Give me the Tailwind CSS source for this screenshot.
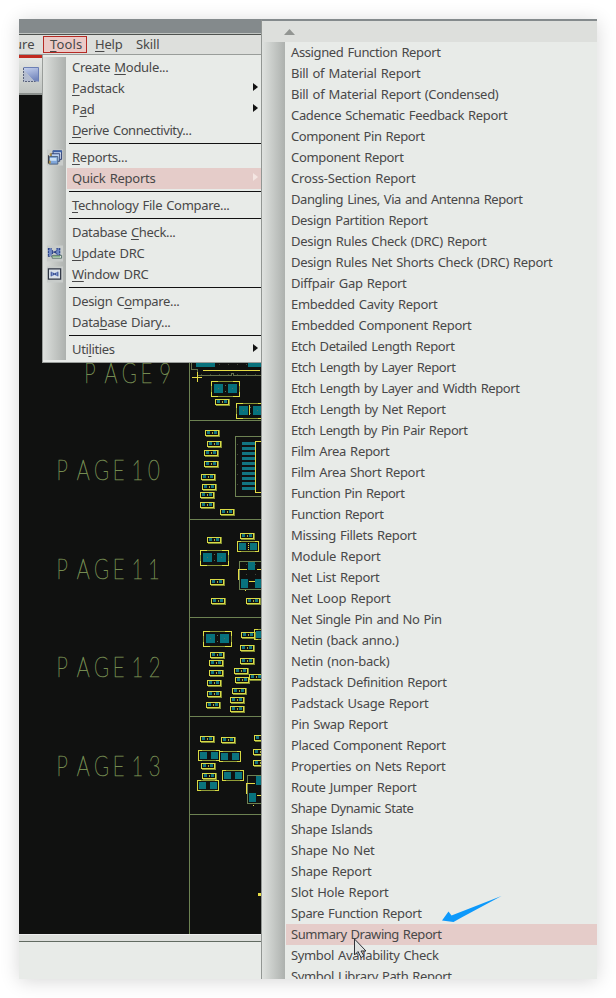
<!DOCTYPE html>
<html lang="en">
<head>
<meta charset="utf-8">
<title>Tools menu</title>
<script src="https://cdn.jsdelivr.net/npm/@tailwindcss/browser@4"></script>
</head>
<body class="bg-white w-[616px] h-[998px] overflow-hidden p-[19px] text-[#484848] text-[13px] font-['Noto_Sans',sans-serif]">
<main class="relative w-[578px] h-[960px] flex flex-col bg-[#e8ebe8] shadow-[0_2px_18px_rgba(0,0,0,0.16)]">
  <div class="h-[14px] shrink-0 bg-[radial-gradient(ellipse_at_95px_10px,#88897b_0,#848a8c_22px)]"></div>
  <div class="h-px shrink-0 bg-[#c0c4c1]"></div>
  <nav class="flex h-[20px] shrink-0 border-t border-[#4e524f] bg-[#dddfdc] leading-[19px]">
    <span class="w-[24px] overflow-hidden flex"><span class="-ml-[5px]">ure</span></span>
    <span class="mt-[1px] h-[17px] w-[44px] border border-[#b52a24] bg-[#ebcac7] pl-[6px] leading-[15px]"><span data-w="32"><u class="decoration-1 underline-offset-2">T</u>ools</span></span>
    <span class="ml-[8px] w-[41px]"><span data-w="27"><u class="decoration-1 underline-offset-2">H</u>elp</span></span>
    <span><span data-w="23">Skill</span></span>
  </nav>
  <div class="h-px shrink-0 bg-[#999d9a]"></div>
  <div class="h-[3px] shrink-0 bg-[#c22a20]"></div>
  <div class="h-[37px] shrink-0 border-b-2 border-[#8b908d] bg-linear-to-b from-[#e3e6e3] to-[#bfc3c0] pt-[8px] pl-[3px]">
    <svg width="18" height="17" viewBox="0 0 18 17"><defs><linearGradient id="b" x2="0.3" y2="1"><stop stop-color="#c7d3ee"/><stop offset="1" stop-color="#7487bd"/></linearGradient></defs><path d="M1.500 1.500h15v14h-4L1.500 4z" fill="url(#b)"/><path d="M1.500 4L12.500 15.500h-11z" fill="#b3bccf"/><path d="M1.500 1.500h15v14" fill="none" stroke="#6b7fb5"/><path d="M1.500 2v13.500h12" fill="none" stroke="#59627c" stroke-dasharray="2 1"/></svg>
  </div>
  <svg class="block shrink-0" width="242" height="839" viewBox="19 95 242 839" shape-rendering="crispEdges">
    <defs>
      <g id="s"><path d="M1 6h14v1H1zM14 0h1v6h-1z" fill="#7f8a31"/><path d="M.5.5h13v5H.5z" fill="none" stroke="#d9db46"/><path d="M2 1h3v3H2zM9 1h3v3H9z" fill="#147680"/><path d="M7 2h1v2H7z" fill="#a9ad3c"/></g>
      <g id="m"><path d="M.5.5h21v10H.5z" fill="none" stroke="#d6d943"/><path d="M4 .5h14M4 10.500h14" stroke="#919d38"/><path d="M2 2h7v7H2zM13 2h7v7h-7z" fill="#0b747e"/></g>
      <g id="l"><path d="M.5.5h28v15H.5z" fill="none" stroke="#8a9535"/><path d="M.5 5V.5H7M22 .5h6.500V5M.5 11v4.500H7M22 15.500h6.500V11" fill="none" stroke="#dfe146"/><path d="M3 3h9v9H3zM17 3h9v9h-9z" fill="#07727d"/><path d="M7 7h1v1H7zM21 7h1v1h-1zM14 4h1v1h-1zM14 10h1v1h-1z" fill="#52705b"/></g>
      <pattern id="d" width="9" height="10" patternUnits="userSpaceOnUse"><path d="M3 4h1v1H3z" fill="#414637"/></pattern>
    </defs>
    <path fill="#101110" d="M19 95h242v839H19z"/>
    <path stroke="#6d8252" fill="none" d="M189.500 362v572M189 420.500h72M189 519.500h72M189 617.500h72M189 716.500h72M189 814.500h72"/>
    <path fill="url(#d)" d="M196 363h65v15h-65zM236 438h25v56h-25zM240 563h21v26h-21z"/>
    <path fill="#08727d" d="M196 362h19v5h-19zM248 362h13v5h-13z"/>
    <path d="M191.500 362v7h6v5M197 375.500h34v-2h2v2h28" fill="none" stroke="#66714c"/>
    <path d="M203 370.500h57M197.500 372v10M192 377.500h10" stroke="#e6dc45"/>
    <use href="#l" x="211" y="381"/><use href="#s" x="215" y="399"/>
    <use href="#l" x="236" y="403"/><path d="M249.500 405v10" stroke="#e6dc45"/>
    <use href="#s" x="205" y="430"/><use href="#s" x="207" y="441"/><use href="#s" x="204" y="450"/><use href="#s" x="204" y="461"/><use href="#s" x="201" y="474"/><use href="#s" x="202" y="484"/><use href="#s" x="200" y="492"/><use href="#s" x="200" y="502"/><use href="#s" x="220" y="509"/>
    <path d="M261 436.500h-25.500v59.500H261" fill="none" stroke="#6d8252"/>
    <path d="M242 442h13v3h-13zm0 5h13v3h-13zm0 5h13v3h-13zm0 5h13v3h-13zm0 5h13v3h-13zm0 5h13v3h-13zm0 5h13v3h-13zm0 5h13v3h-13zm0 5h13v3h-13zm0 5h13v3h-13z" fill="#127581"/>
    <path d="M261 441.500h-5.500v51h5.500" fill="none" stroke="#e6dc45"/>
    <use href="#s" x="207" y="537"/><use href="#l" x="200" y="550"/><use href="#s" x="240" y="533"/><use href="#m" x="237" y="541"/><path d="M248.500 543v7" stroke="#e6dc45" stroke-dasharray="1"/>
    <use href="#s" x="210" y="579"/><use href="#s" x="211" y="598"/><use href="#s" x="246" y="598"/>
    <path d="M261 561.500h-21.500v27.500H261" fill="none" stroke="#6d8252"/><path d="M248 562h7v8h-7zM241 579h7v9h-7zM255 579h6v9h-6z" fill="#08727d"/><path d="M238.500 580v-10.500h8M257 569.500h4M249 581.500h6" fill="none" stroke="#e6dc45"/><path d="M245 590h1v1h-1z" fill="#e6dc45"/>
    <use href="#l" x="203" y="631"/><use href="#s" x="210" y="652"/><use href="#s" x="209" y="660"/><use href="#s" x="209" y="670"/><use href="#s" x="207" y="680"/><use href="#s" x="207" y="691"/><use href="#s" x="206" y="702"/>
    <use href="#s" x="241" y="632"/><use href="#m" x="254" y="629"/><use href="#s" x="240" y="645"/><use href="#s" x="240" y="658"/><use href="#s" x="234" y="668"/><use href="#s" x="235" y="677"/><use href="#s" x="249" y="674"/><use href="#s" x="232" y="688"/><use href="#s" x="230" y="697"/><use href="#s" x="230" y="706"/>
    <use href="#s" x="200" y="736"/><use href="#s" x="221" y="737"/><use href="#s" x="254" y="735"/>
    <use href="#m" x="198" y="750"/><use href="#m" x="219" y="751"/><use href="#s" x="253" y="749"/><use href="#s" x="253" y="760"/><use href="#s" x="201" y="763"/><use href="#s" x="202" y="773"/><use href="#m" x="222" y="770"/><use href="#m" x="197" y="780"/>
    <path d="M261 775.500h-13.500v27.500H261" fill="none" stroke="#6d8252"/><path d="M256 776h5v9h-5zM249 793h7v9h-7z" fill="#08727d"/><path d="M246.500 794v-10.500h8M257 795.500h4" fill="none" stroke="#e6dc45"/><path d="M253 805h1v1h-1zM258 893h3v3h-3z" fill="#e6dc45"/>
    <g fill="#748b51" stroke="#748b51" stroke-width="0.6" font-family="Lato" font-weight="100" font-size="27" shape-rendering="auto" transform="translate(1 .5) scale(.75 1)">
      <text x="111 138 161 186 211" y="383">PAGE9</text>
      <text x="74 101 124 149 174 196" y="480">PAGE10</text>
      <text x="74 101 124 149 174 196" y="579">PAGE11</text>
      <text x="74 101 124 149 174 197" y="677">PAGE12</text>
      <text x="74 101 124 149 174 197" y="776">PAGE13</text>
    </g>
  </svg>
  <div class="h-[8px] shrink-0 border-b border-[#626b62] bg-[#dddfdc] border-t border-t-[#eeeeee]"></div>
  <div class="flex-1"></div>

  <section class="absolute left-[23px] top-[35px] w-[220px] h-[309px] border border-[#999d9a] bg-[#e8ebe8] pt-[2px] pb-[2px] flex">
    <div class="w-[23px] h-full bg-linear-to-r from-[#dde0dd] to-[#adb1ae] relative">
      <svg class="absolute left-[4px] top-[92px]" width="16" height="17" viewBox="0 0 17 17"><path fill="#c8ccca" d="M0 0h17v17H0z"/><path d="M6.500 1.500h9v9h-9z" fill="#dce6f6" stroke="#263a70"/><path d="M6 1h10v2H6z" fill="#3c61a7"/><path d="M4.500 4.500h9v8h-9z" fill="#b9d0ee" stroke="#263a70"/><path d="M2.500 7.500h9v8h-9z" fill="#80a7db" stroke="#4a617f"/><path d="M3 9h7v3H3z" fill="#c9e0f4"/><path d="M3 4h2v3H3zM1 12h3v3H1z" fill="#ad9148"/><path d="M1 6h1v9H1z" fill="#302e39"/></svg>
      <svg class="absolute left-[4px] top-[188px]" width="16" height="17" viewBox="0 0 17 17"><path fill="#c8ccca" d="M0 0h17v17H0z"/><path d="M1 3h4v8H1zM10 3h4v8h-4z" fill="#6f89c6"/><path d="M5 5l5 4V5L5 9z" fill="#344b94"/><path d="M1.500 3v9M5 5l6 4M5 9l6-4M13.500 3v9M1 3.500h4M10 3.500h4M1 11.500h4" fill="none" stroke="#20357b" stroke-dasharray="2 1"/><path d="M5.500 10.500h10v3h-10z" fill="#f2f8ed" stroke="#536c66"/><path d="M6 12h8" stroke="#57965b"/></svg>
      <svg class="absolute left-[4px] top-[209px]" width="16" height="17" viewBox="0 0 17 17"><path fill="#c8ccca" d="M0 0h17v17H0z"/><path d="M1.500 2.500h13v11h-13z" fill="#dae1e9" stroke="#2e3543" stroke-width="1.300"/><path d="M4 6h3v4H4zM9 6h3v4H9z" fill="#8ba2d5"/><path d="M4.500 5.500v5M6 7l4 2M6 9l4-2M11.500 5.500v5" stroke="#354b90"/></svg>
    </div>
    <div id="tools" class="flex-1"></div>
  </section>

  <section class="absolute left-[242px] top-0 w-[336px] h-[960px] overflow-hidden border-l border-t-2 border-l-[#929693] border-t-[#848a8c] bg-[#e8ebe8] flex flex-col">
    <div class="h-[21px] shrink-0 bg-[#dddfdc] pl-[22px] pt-[8px]"><svg class="block" width="11" height="6"><path d="M5.500 0L11 6H0z" fill="#929592"/></svg></div>
    <div class="flex">
      <div class="w-[23px] shrink-0 h-[937px] bg-linear-to-r from-[#dfe2df] to-[#adb1ae]"></div>
      <div id="reports" class="ml-[1px] flex-1"></div>
    </div>
  </section>
  <svg class="absolute left-[421px] top-[874px]" width="64" height="31" viewBox="440 893 64 31"><path d="M501.500 896L461.500 917.500l-8 4.500L442 920.500l6.500-9 3 4z" fill="#0d99fb"/></svg>
  <svg class="absolute left-[334px] top-[919px]" width="16" height="22" viewBox="0 0 16 22"><path d="M1.500 1v16l3.500-3.500 3 6 3-1.500-3-5h5z" fill="#dfe2e0" stroke="#303238"/></svg>
</main>
<script>
// Each entry is a label and its drawn width; "_" marks the access key, ">" a submenu.
const tools = [['Create _Module...',96],['_Padstack>',52],['P_ad>',22],['_Derive Connectivity...',119],['-'],['_Reports...',55],['Quick Reports>',83],['-'],['_Technology File Compare...',157],['-'],['Database _Check...',103],['_Update DRC',72],['_Window DRC',76],['-'],['Design C_ompare...',107],['Data_base Diary...',98],['-'],['Uti_lities>',42]];
const reports = [['Assigned Function Report',149],['Bill of Material Report',129],['Bill of Material Report (Condensed)',207],['Cadence Schematic Feedback Report',216],['Component Pin Report',133],['Component Report',112],['Cross-Section Report',124],['Dangling Lines, Via and Antenna Report',231],['Design Partition Report',136],['Design Rules Check (DRC) Report',195],['Design Rules Net Shorts Check (DRC) Report',261],['Diffpair Gap Report',115],['Embedded Cavity Report',146],['Embedded Component Report',180],['Etch Detailed Length Report',163],['Etch Length by Layer Report',164],['Etch Length by Layer and Width Report',228],['Etch Length by Net Report',154],['Etch Length by Pin Pair Report',176],['Film Area Report',98],['Film Area Short Report',133],['Function Pin Report',113],['Function Report',92],['Missing Fillets Report',125],['Module Report',89],['Net List Report',88],['Net Loop Report',99],['Net Single Pin and No Pin',150],['Netin (back anno.)',107],['Netin (non-back)',98],['Padstack Definition Report',155],['Padstack Usage Report',137],['Pin Swap Report',96],['Placed Component Report',154],['Properties on Nets Report',154],['Route Jumper Report',125],['Shape Dynamic State',122],['Shape Islands',81],['Shape No Net',83],['Shape Report',80],['Slot Hole Report',97],['Spare Function Report',130],['Summary Drawing Report',150],['Symbol Availability Check',147],['Symbol Library Path Report',160]];
document.getElementById('tools').innerHTML = tools.map(([t, w]) => {
  if (t === '-') return '<div class="h-[6px] pt-[2px] pl-[3px]"><div class="h-px bg-[#111]"></div></div>';
  const hot = t.startsWith('Quick');
  const label = t.replace('>', '').replace(/_(.)/, '<u class="underline-offset-2 decoration-1">$1</u>');
  const arrow = t.endsWith('>') ? `<svg class="mr-[3px] -mt-[3px]" width="5" height="8"><path d="M0 0L5 4L0 8z" fill="${hot ? '#f4e6e2' : '#111'}"/></svg>` : '';
  return `<div class="h-[21px] flex items-center justify-between leading-[21px] ${hot ? 'bg-[#e5ccc9] ml-[1px] pl-[5px]' : 'pl-[6px]'}"><span data-w="${w}">${label}</span>${arrow}</div>`;
}).join('');
document.getElementById('reports').innerHTML = reports.map(([t, w]) => `<div class="h-[21px] pl-[5px] leading-[21px] whitespace-nowrap ${t.startsWith('Summary') ? 'bg-[#e5ccc9]' : ''}"><span data-w="${w}">${t}</span></div>`).join('');
// Glyph advances change once spacing is set, so the fit is refined in a few passes.
function fit() {
  document.querySelectorAll('[data-w]').forEach(e => {
    e.style.fontFamily = "'Noto Sans', sans-serif";
    e.style.fontSize = '13px';
    e.style.whiteSpace = 'nowrap';
    e.style.wordSpacing = '1px';
    let spacing = -0.2;
    e.style.letterSpacing = spacing + 'px';
    for (let i = 0; i < 4; i++) {
      spacing += (+e.dataset.w + 0.5 - e.getBoundingClientRect().width) / e.textContent.length;
      e.style.letterSpacing = spacing.toFixed(3) + 'px';
    }
  });
}
fit();
window.addEventListener('load', fit);
</script>
</body>
</html>
